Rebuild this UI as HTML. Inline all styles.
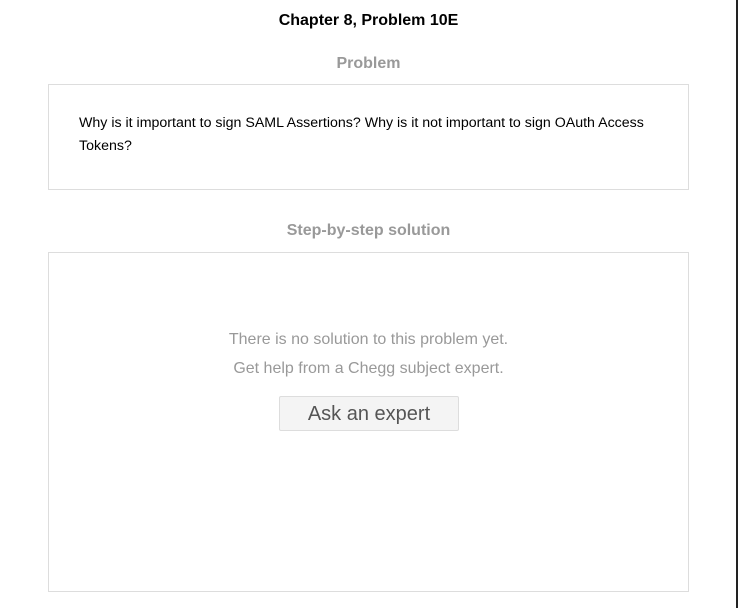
<!DOCTYPE html>
<html><head><style>
body{margin:0;width:738px;height:608px;background:#fff;font-family:"Liberation Sans",Arial,sans-serif;position:relative;overflow:hidden}
.edge{position:absolute;right:0;top:0;width:2px;height:608px;background:#222}
.t{position:absolute;left:0;width:737px;text-align:center}
.box{position:absolute;left:48px;width:639px;border:1px solid #ddd;box-sizing:content-box}
</style></head><body>
<div class="edge"></div>
<div class="t" style="top:12px;font-size:16px;font-weight:bold;color:#000">Chapter 8, Problem 10E</div>
<div class="t" style="top:55px;font-size:16px;font-weight:bold;color:#999">Problem</div>
<div class="box" style="top:84px;height:104px">
<div style="position:absolute;left:30px;top:27px;width:600px;font-size:14.2px;line-height:23px;color:#000">Why is it important to sign SAML Assertions? Why is it not important to sign OAuth Access Tokens?</div>
</div>
<div class="t" style="top:222px;font-size:16px;font-weight:bold;color:#999">Step-by-step solution</div>
<div class="box" style="top:252px;height:338px"></div>
<div class="t" style="top:331px;font-size:16px;color:#999">There is no solution to this problem yet.</div>
<div class="t" style="top:360px;font-size:16px;color:#999">Get help from a Chegg subject expert.</div>
<div style="position:absolute;left:279px;top:396px;width:178px;height:33px;border:1px solid #ddd;border-radius:2px;background:#f4f4f4;text-align:center;line-height:35px;font-size:20px;color:#555">Ask an expert</div>
</body></html>
